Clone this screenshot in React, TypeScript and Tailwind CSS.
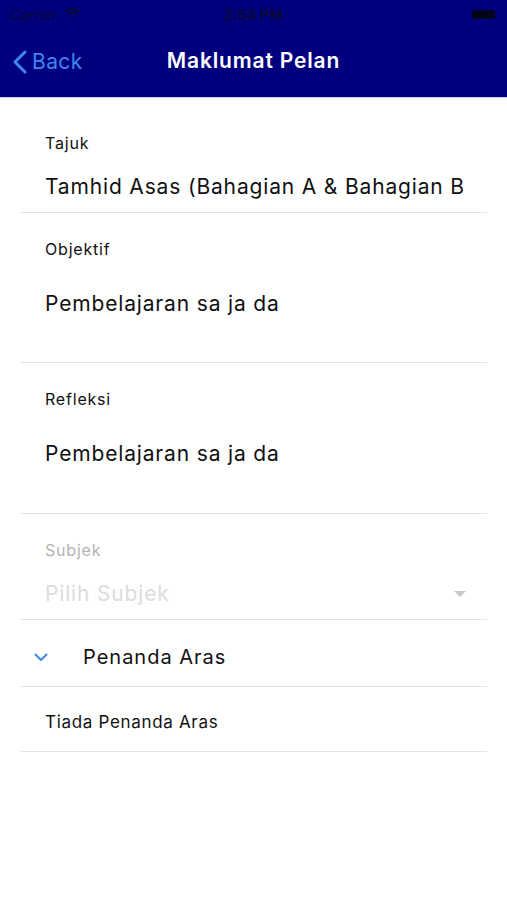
import React from 'react';

const font = { fontFamily: 'Inter, "Noto Sans", sans-serif' };

const StatusBar = () => (
  <div className="h-[28px] flex items-center justify-between px-[10px] text-[#0b0b33] text-[14px]">
    <div className="flex items-center gap-[6px] w-[120px]">
      <span className="tracking-[0.02em]">Carrier</span>
      <svg width="17" height="12" viewBox="0 0 17 12" className="fill-[#0b0b33]">
        <path d="M8.5 2.2c2.5 0 4.7 1 6.4 2.6l1.3-1.3C14.1 1.4 11.4.3 8.5.3S2.9 1.4.8 3.5l1.3 1.3C3.8 3.2 6 2.2 8.5 2.2z" />
        <path d="M8.5 5.6c1.5 0 2.9.6 3.9 1.6l1.3-1.3C12.4 4.6 10.5 3.7 8.5 3.7s-3.9.9-5.2 2.2l1.3 1.3c1-1 2.4-1.6 3.9-1.6z" />
        <path d="M8.5 8.9c.6 0 1.1.2 1.5.6L8.5 11 7 9.5c.4-.4.9-.6 1.5-.6z" />
      </svg>
    </div>
    <span className="font-semibold tracking-[0.03em]">2:54 PM</span>
    <div className="w-[120px] flex justify-end pr-[2px]">
      <div className="w-[23px] h-[9px] rounded-[2px] bg-[#05051a]" />
    </div>
  </div>
);

const NavBar = () => (
  <div className="h-[69px] relative flex items-center justify-center">
    <div className="absolute left-[12px] top-[18px] flex items-center gap-[4px] text-[#3f86ef] text-[21px] tracking-[0.02em]">
      <svg width="16" height="24" viewBox="0 0 16 24" fill="none" stroke="#3f86ef" strokeWidth="3" strokeLinecap="round" strokeLinejoin="round">
        <path d="M13 2 3 12l10 10" />
      </svg>
      <span>Back</span>
    </div>
    <span className="text-white text-[21px] font-semibold tracking-[0.04em] mb-[4px]">Maklumat Pelan</span>
  </div>
);

type FieldProps = {
  label: string;
  value: string;
  gap: string;
  height: string;
};

const Field: React.FC<FieldProps> = ({ label, value, gap, height }) => (
  <div className={`${height} border-b border-[#e4e4e4] px-[25px] pt-[25px] flex flex-col`}>
    <span className="text-[16px] leading-[22px] tracking-[0.05em] text-[#111]">{label}</span>
    <span className={`${gap} text-[21px] leading-[28px] tracking-[0.04em] text-[#111] whitespace-nowrap overflow-hidden`}>{value}</span>
  </div>
);

export default function App() {
  return (
    <div className="w-[507px] h-[900px] bg-white" style={font}>
      <div className="bg-[#00007f] border-b border-[#cfcfd8]">
        <StatusBar />
        <NavBar />
      </div>

      <div className="mx-[20px]">
        <div className="h-[115px] border-b border-[#e4e4e4] px-[25px] pt-[34px] flex flex-col">
          <span className="text-[16px] leading-[22px] tracking-[0.05em] text-[#111]">Tajuk</span>
          <span className="mt-[19px] text-[21px] leading-[28px] tracking-[0.04em] text-[#111] whitespace-nowrap overflow-hidden w-[418px]">
            Tamhid Asas (Bahagian A &amp; Bahagian B)
          </span>
        </div>

        <Field label="Objektif" value="Pembelajaran sa ja da" gap="mt-[30px]" height="h-[150px]" />
        <Field label="Refleksi" value="Pembelajaran sa ja da" gap="mt-[30px]" height="h-[151px]" />

        {/* Subjek (disabled select) */}
        <div className="h-[106px] border-b border-[#e4e4e4] px-[25px] pt-[25px] flex flex-col">
          <span className="text-[16px] leading-[22px] tracking-[0.05em] text-[#b3b3b3]">Subjek</span>
          <div className="mt-[19px] flex items-center justify-between">
            <span className="text-[21px] leading-[28px] tracking-[0.04em] text-[#dcdcdc]">Pilih Subjek</span>
            <svg width="12" height="7" viewBox="0 0 12 7" className="mr-[-4px]">
              <path d="M0 0h12L6 6z" fill="#c9c9c9" />
            </svg>
          </div>
        </div>

        {/* Penanda Aras */}
        <div className="h-[67px] border-b border-[#e4e4e4] flex items-center pt-[8px] pl-[14px]">
          <svg width="14" height="9" viewBox="0 0 14 9" fill="none" stroke="#3f86ef" strokeWidth="2" strokeLinecap="round" strokeLinejoin="round">
            <path d="M1.5 1.5 7 7l5.5-5.5" />
          </svg>
          <span className="ml-[35px] text-[20px] tracking-[0.05em] text-[#111]">Penanda Aras</span>
        </div>

        <div className="h-[65px] border-b border-[#e4e4e4] flex items-center px-[25px] pt-[8px]">
          <span className="text-[17px] tracking-[0.04em] text-[#111]">Tiada Penanda Aras</span>
        </div>
      </div>
    </div>
  );
}
